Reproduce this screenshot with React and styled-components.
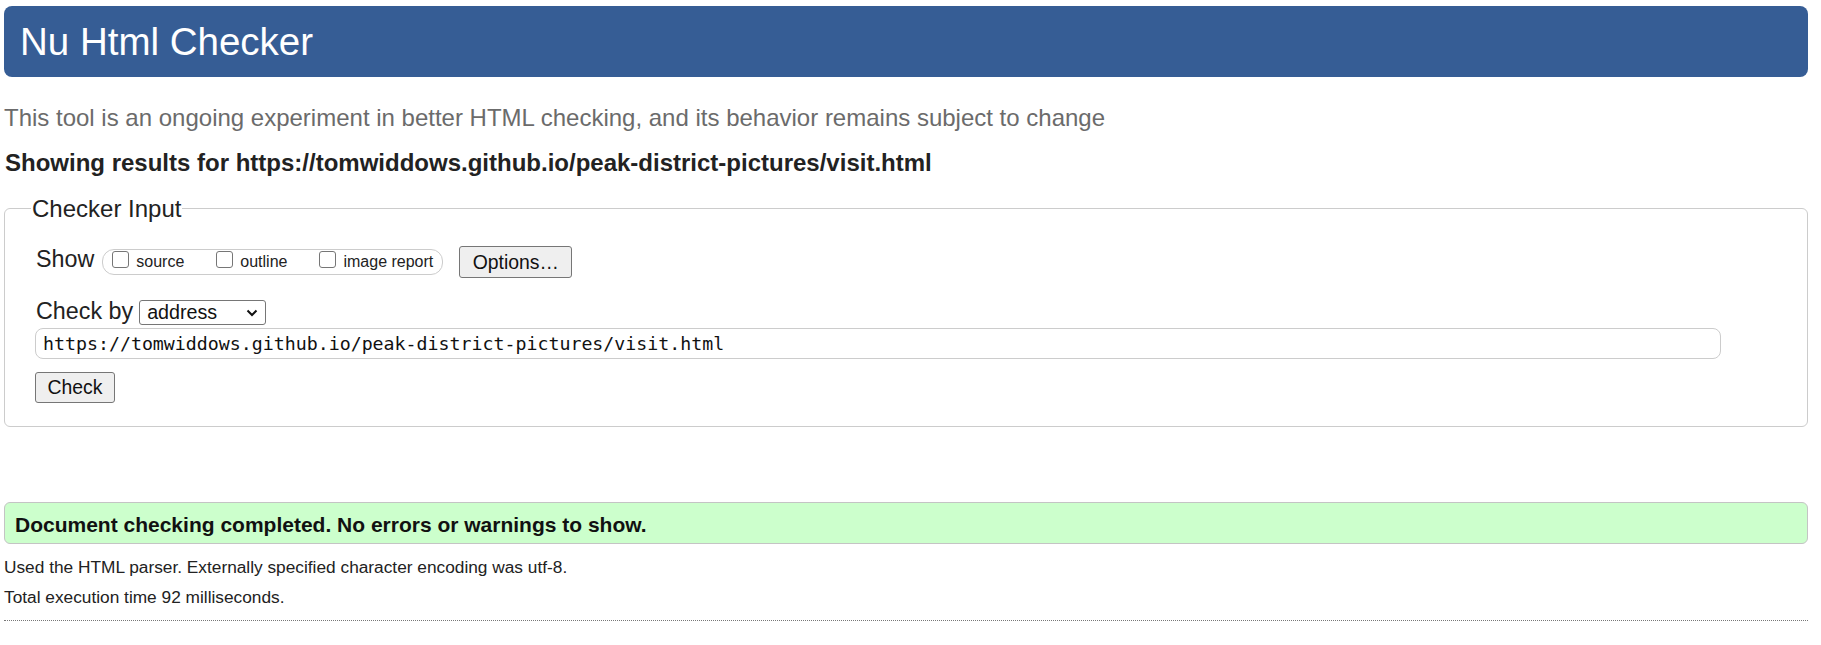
import React from "react";
import styled, { createGlobalStyle } from "styled-components";

const GlobalStyle = createGlobalStyle`
  html, body {
    margin: 0;
    padding: 0;
    background: #fff;
  }
  body {
    font-family: "Liberation Sans", Arial, sans-serif;
    color: #222;
  }
`;

const Page = styled.div`
  width: 1804px;
  padding: 6px 0 20px 4px;
`;

const Header = styled.header`
  height: 71px;
  background: #365d95;
  border-radius: 8px;
  padding-left: 16px;

  h1 {
    margin: 0;
    font-weight: normal;
    font-size: 38.5px;
    line-height: 71px;
    color: #fff;
  }
`;

const Intro = styled.p`
  margin: 27px 0 0 0;
  font-size: 24px;
  line-height: 28px;
  color: #6b6b6b;
`;

const Results = styled.p`
  margin: 17px 0 0 1px;
  font-size: 24px;
  line-height: 28px;
  font-weight: bold;
  color: #222;
`;

const Fieldset = styled.fieldset`
  margin: 18px 0 0 0;
  box-sizing: border-box;
  width: 1804px;
  border: 1px solid #ccc;
  border-radius: 6px;
  padding: 24px 20px 23px 31px;
  min-width: 0;

  legend {
    margin-left: -5px;
    padding: 0 1px;
    font-size: 24px;
    line-height: 27px;
    color: #222;
  }
`;

const Row = styled.div`
  display: flex;
  align-items: center;
  height: ${(p) => p.$h}px;
  margin-top: ${(p) => p.$top || 0}px;
`;

const Label = styled.span`
  font-size: 23.3px;
  line-height: 27px;
  margin-bottom: ${(p) => p.$lift || 0}px;
  margin-right: ${(p) => p.$gap}px;
`;

const Pill = styled.div`
  display: flex;
  align-items: center;
  gap: 32px;
  box-sizing: border-box;
  height: 26px;
  padding: 0 9px;
  border: 1px solid #ccc;
  border-radius: 12px;
`;

const Option = styled.label`
  display: flex;
  align-items: center;
  font-size: 16px;
  line-height: 18px;
  color: #222;
`;

const Box = styled.input`
  appearance: none;
  box-sizing: border-box;
  width: 17px;
  height: 17px;
  margin: 0 7px 5px 0;
  border: 1px solid #767676;
  border-radius: 3px;
  background: #fff;
`;

const Button = styled.button`
  box-sizing: border-box;
  width: ${(p) => p.$w}px;
  height: ${(p) => p.$h}px;
  margin-left: ${(p) => p.$left || 0}px;
  padding: 0;
  font-family: "Liberation Sans", Arial, sans-serif;
  font-size: 19.4px;
  color: #111;
  background: #efefef;
  border: 1px solid #767676;
  border-radius: 3px;
`;

const SelectWrap = styled.div`
  position: relative;
  width: 127px;
  height: 25px;

  svg {
    position: absolute;
    right: 8px;
    top: 9px;
    pointer-events: none;
  }
`;

const Select = styled.select`
  appearance: none;
  box-sizing: border-box;
  width: 100%;
  height: 100%;
  padding: 0 0 0 7px;
  font-family: "Liberation Sans", Arial, sans-serif;
  font-size: 19.7px;
  color: #111;
  background: #fff;
  border: 1px solid #767676;
  border-radius: 3px;
`;

const UrlInput = styled.input`
  display: block;
  box-sizing: border-box;
  width: 1686px;
  height: 31px;
  margin: 3px 0 0 -1px;
  padding: 0 0 0 7px;
  font-family: "DejaVu Sans Mono", "Liberation Mono", monospace;
  font-size: 18.25px;
  color: #111;
  border: 1px solid #ccc;
  border-radius: 8px;
  outline: none;
`;

const Success = styled.div`
  margin-top: 75px;
  box-sizing: border-box;
  height: 42px;
  padding: 10px 10px 6px;
  background: #ccffcc;
  border: 1px solid #c4c4c4;
  border-radius: 6px;
  font-size: 21px;
  line-height: 24px;
  font-weight: bold;
  color: #111;
`;

const Note = styled.p`
  margin: ${(p) => p.$top}px 0 0;
  font-size: 17.3px;
  line-height: 20px;
  color: #222;
`;

const Rule = styled.hr`
  margin: 13px 0 0;
  border: 0;
  border-top: 1px dotted #777;
  height: 0;
`;

function Chevron() {
  return (
    <svg width="12" height="8" viewBox="0 0 12 8">
      <polyline
        points="1.5,1.5 6,6 10.5,1.5"
        fill="none"
        stroke="#111"
        strokeWidth="2"
      />
    </svg>
  );
}

const url = "https://tomwiddows.github.io/peak-district-pictures/visit.html";

export default function App() {
  return (
    <Page>
      <GlobalStyle />
      <Header>
        <h1>Nu Html Checker</h1>
      </Header>
      <Intro>
        This tool is an ongoing experiment in better HTML checking, and its
        behavior remains subject to change
      </Intro>
      <Results>Showing results for {url}</Results>

      <Fieldset>
        <legend>Checker Input</legend>
        <Row $h={32}>
          <Label $gap={8} $lift={6}>Show</Label>
          <Pill>
            <Option>
              <Box type="checkbox" />
              source
            </Option>
            <Option>
              <Box type="checkbox" />
              outline
            </Option>
            <Option>
              <Box type="checkbox" />
              image report
            </Option>
          </Pill>
          <Button $w={113} $h={32} $left={16}>
            Options…
          </Button>
        </Row>
        <Row $h={26} $top={21}>
          <Label $gap={6} $lift={2}>Check by</Label>
          <SelectWrap>
            <Select defaultValue="address">
              <option value="address">address</option>
              <option value="file">file upload</option>
              <option value="text">text input</option>
            </Select>
            <Chevron />
          </SelectWrap>
        </Row>
        <UrlInput type="url" defaultValue={url} />
        <Row $h={31} $top={13}>
          <Button $w={80} $h={31} $left={-1}>
            Check
          </Button>
        </Row>
      </Fieldset>

      <Success>Document checking completed. No errors or warnings to show.</Success>
      <Note $top={13}>
        Used the HTML parser. Externally specified character encoding was utf-8.
      </Note>
      <Note $top={10}>Total execution time 92 milliseconds.</Note>
      <Rule />
    </Page>
  );
}
